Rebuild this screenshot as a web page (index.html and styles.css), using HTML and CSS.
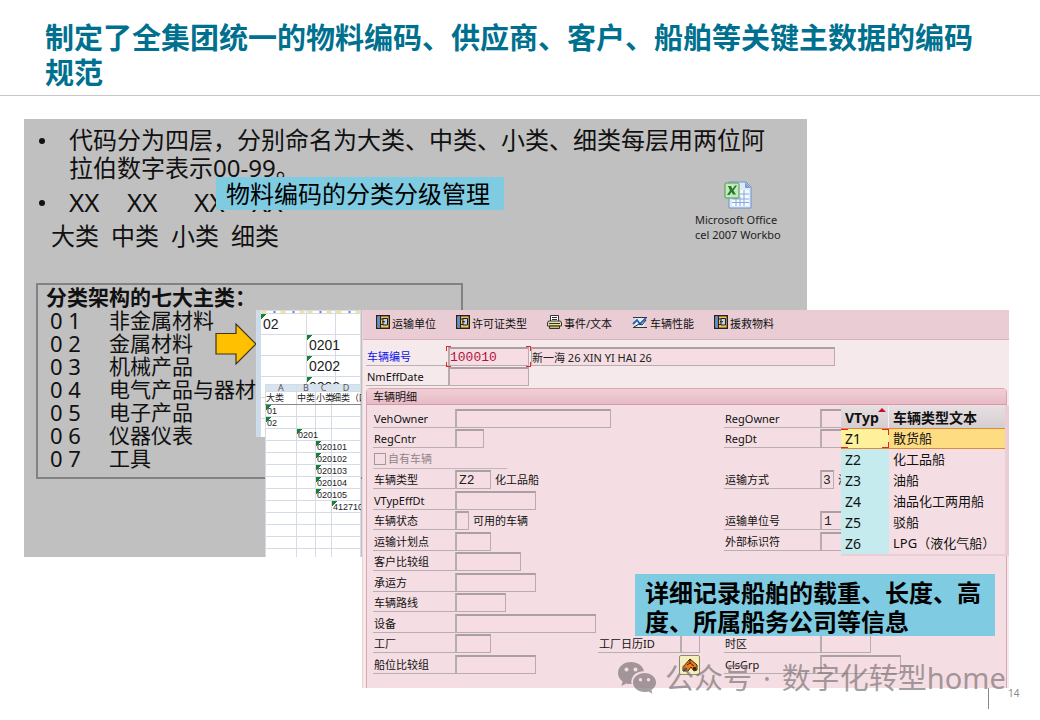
FILE: index.html
```html
<!DOCTYPE html>
<html lang="zh-CN">
<head>
<meta charset="utf-8">
<title>主数据编码规范</title>
<link rel="stylesheet" href="styles.css">
</head>
<body>
<svg width="0" height="0" class="defs" aria-hidden="true">
  <symbol id="ico-unit" viewBox="0 0 14 14">
    <rect x=".7" y=".7" width="12.600" height="12.600" fill="#f7c04a" stroke="#222" stroke-width="1.400"/>
    <path d="M1.400 1.400h2.600v11.200H1.400z" fill="#5b8ad6"/><path d="M4.500 1v12" stroke="#222"/>
    <path d="M5 4h2.500M5 9.500h2.500" stroke="#222"/>
    <path d="M7 3.500h4.500v6.500H7z" fill="#b9d3f5" stroke="#222"/>
    <path d="M6 6.700h3" stroke="#222"/>
  </symbol>
</svg>
<main class="slide">
  <header class="slide-head">
    <h1>制定了全集团统一的物料编码、供应商、客户、船舶等关键主数据的编码规范</h1>
  </header>

  <div class="stage">
    <section class="codes">
      <ul class="rules">
        <li>代码分为四层，分别命名为大类、中类、小类、细类每层用两位阿拉伯数字表示00-99。</li>
        <li class="pairs"><span>XX</span><span>XX</span><span>XX</span><span>XX</span></li>
      </ul>
      <p class="levels"><span>大类</span><span>中类</span><span>小类</span><span>细类</span></p>
      <div class="classes">
        <h2>分类架构的七大主类：</h2>
        <dl>
          <dt>0 1</dt><dd>非金属材料</dd>
          <dt>0 2</dt><dd>金属材料</dd>
          <dt>0 3</dt><dd>机械产品</dd>
          <dt>0 4</dt><dd>电气产品与器材</dd>
          <dt>0 5</dt><dd>电子产品</dd>
          <dt>0 6</dt><dd>仪器仪表</dd>
          <dt>0 7</dt><dd>工具</dd>
        </dl>
      </div>
    </section>

    <figure class="attachment">
      <svg width="28" height="28" viewBox="0 0 28 28" aria-hidden="true">
        <path d="M5 1h17l5 5v21H5z" fill="#dbe9fb" stroke="#6f93c8"/>
        <path d="M21 1v6h6z" fill="#7fa0d4"/>
        <path d="M16 9h9v16H8v-7h8z" fill="#f4f8ff"/>
        <path d="M8 18h17M8 21.500h17M12 16v9M16 16v9M20 9v16M16 13h9" stroke="#8aa8dc"/>
        <rect x="1" y="2" width="14" height="15" rx="1" fill="#c5e8bd" stroke="#4f9a51"/>
        <path d="M4 5h3l1.500 3L11 4.500h2L9.500 9.500l2.500 4H9L7.500 11l-2 3H3l3-4.500z" fill="#257b2d"/>
      </svg>
      <figcaption>Microsoft Office<br>cel 2007 Workbo</figcaption>
    </figure>

    <p class="callout callout-top">物料编码的分类分级管理</p>

    <svg class="arrow" width="42" height="42" viewBox="0 0 42 42" aria-hidden="true">
      <path d="M1 10.500H21V1L41 21 21 41V31H1z" fill="#ffc000" stroke="#3d3520" stroke-width="1.200"/>
    </svg>

    <div class="sheet sheet-back">
      <table>
        <colgroup><col class="w4"><col class="w46"><col class="w29"><col></colgroup>
        <tr class="strip"><th></th><td></td><td></td><td></td></tr>
        <tr><th></th><td class="n">02</td><td></td><td></td></tr>
        <tr><th></th><td></td><td class="n">0201</td><td></td></tr>
        <tr><th></th><td></td><td class="n">0202</td><td></td></tr>
        <tr><th></th><td></td><td class="n">0203</td><td></td></tr>
        <tr><th></th><td></td><td></td><td></td></tr>
        <tr><th></th><td></td><td></td><td></td></tr>
      </table>
    </div>

    <div class="sheet sheet-front">
      <table>
        <colgroup><col class="w31"><col class="w19"><col class="w16"><col></colgroup>
        <tr class="letters"><th>A</th><th>B</th><th>C</th><th>D</th></tr>
        <tr class="names"><td>大类</td><td>中类</td><td>小类</td><td>细类（四</td></tr>
        <tr><td class="n">01</td><td></td><td></td><td></td></tr>
        <tr><td class="n">02</td><td></td><td></td><td></td></tr>
        <tr><td></td><td class="n">0201</td><td></td><td></td></tr>
        <tr><td></td><td></td><td class="n">020101</td><td></td></tr>
        <tr><td></td><td></td><td class="n">020102</td><td></td></tr>
        <tr><td></td><td></td><td class="n">020103</td><td></td></tr>
        <tr><td></td><td></td><td class="n">020104</td><td></td></tr>
        <tr><td></td><td></td><td class="n">020105</td><td></td></tr>
        <tr><td></td><td></td><td></td><td class="n">412710</td></tr>
        <tr><td></td><td></td><td></td><td></td></tr>
        <tr><td></td><td></td><td></td><td></td></tr>
        <tr><td></td><td></td><td></td><td></td></tr>
        <tr><td></td><td></td><td></td><td></td></tr>
      </table>
    </div>

    <form class="vehicle">
      <div class="toolbar">
        <button type="button"><svg width="14" height="14"><use href="#ico-unit"/></svg>运输单位</button>
        <button type="button"><svg width="14" height="14"><use href="#ico-unit"/></svg>许可证类型</button>
        <button type="button"><svg width="15" height="14" viewBox="0 0 15 14"><path d="M3.500 6V.5h8V6" fill="#fff" stroke="#333"/><path d="M5 2.500h5M5 4.500h5" stroke="#333"/><path d="M1.500 6h12l1 2v3H.5V8z" fill="#e9e2a0" stroke="#333"/><path d="M2.500 11h10v2.500h-10z" fill="#c9bd5c" stroke="#333"/><path d="M2 8.500h11" stroke="#333"/></svg>事件/文本</button>
        <button type="button"><svg width="16" height="13" viewBox="0 0 16 13"><path d="M1 1.500h14M1 11.500h14" stroke="#333"/><path d="M3 2h11l-2 9H2z" fill="#e3eefb"/><path d="M1 8l4-4 3 4 6-6" fill="none" stroke="#275fae" stroke-width="1.800"/><path d="M2 11l5-3 3 1 4-5" fill="none" stroke="#222"/></svg>车辆性能</button>
        <button type="button"><svg width="14" height="14"><use href="#ico-unit"/></svg>援救物料</button>
      </div>

      <div class="ident">
        <div class="cell"><label for="veh" class="key">车辆编号</label><span class="focus"><input id="veh" class="code f81" value="100010"></span><input class="name" aria-label="车辆名称" value="新一海 26 XIN YI HAI 26"></div>
        <div class="cell"><label for="nm">NmEffDate</label><input id="nm" class="f81"></div>
      </div>

      <fieldset class="detail">
        <legend>车辆明细</legend>
        <div class="rows">
          <div class="row"><div class="cell"><label for="a1">VehOwner</label><input id="a1" class="f156"></div><div class="cell right"><label for="b1">RegOwner</label><input id="b1" class="f81"></div></div>
          <div class="row"><div class="cell"><label for="a2">RegCntr</label><input id="a2" class="f29"></div><div class="cell right"><label for="b2">RegDt</label><input id="b2" class="f81"></div></div>
          <div class="row"><div class="own"><input id="own" type="checkbox" disabled><label for="own">自有车辆</label></div></div>
          <div class="row"><div class="cell"><label for="a4">车辆类型</label><input id="a4" class="code f36" value="Z2"><span>化工品船</span></div><div class="cell right"><label for="b4">运输方式</label><input id="b4" class="code f14" value="3"><span>海运</span></div></div>
          <div class="row"><div class="cell"><label for="a5">VTypEffDt</label><input id="a5" class="f81"></div></div>
          <div class="row"><div class="cell"><label for="a6">车辆状态</label><input id="a6" class="f14"><span>可用的车辆</span></div><div class="cell right"><label for="b6">运输单位号</label><input id="b6" class="code f36" value="1"></div></div>
          <div class="row"><div class="cell"><label for="a7">运输计划点</label><input id="a7" class="f36"></div><div class="cell right"><label for="b7">外部标识符</label><input id="b7" class="f81"></div></div>
          <div class="row"><div class="cell"><label for="a8">客户比较组</label><input id="a8" class="f66"></div></div>
          <div class="row"><div class="cell"><label for="a9">承运方</label><input id="a9" class="f81"></div></div>
          <div class="row"><div class="cell"><label for="a10">车辆路线</label><input id="a10" class="f51"></div></div>
          <div class="row"><div class="cell"><label for="a11">设备</label><input id="a11" class="f141"></div></div>
          <div class="row"><div class="cell"><label for="a12">工厂</label><input id="a12" class="f36"></div><div class="cell mid"><label for="c12">工厂日历ID</label><input id="c12" class="f20"></div><div class="cell right"><label for="b12">时区</label><input id="b12" class="f51"></div></div>
          <div class="row"><div class="cell"><label for="a13">船位比较组</label><input id="a13" class="f81"></div><div class="cell mid"><button type="button" class="pick" aria-label="分类"><svg width="16" height="14" viewBox="0 0 16 14"><path d="M1 9L8 1l7 6v5l-3 1-3-4-3 4H1z" fill="#f47a16" stroke="#40260a"/><path d="M8 1v4l4 3M5 7l3-2" stroke="#40260a" fill="none"/><path d="M2 10h3v3H2zM11 9h3v3h-3z" fill="#3a2a1a"/></svg></button></div><div class="cell right"><label for="b13">ClsGrp</label><input id="b13" class="f81"></div></div>
        </div>
      </fieldset>
    </form>

    <table class="types">
      <thead><tr><th>VTyp<i class="sort"></i></th><th>车辆类型文本</th></tr></thead>
      <tbody>
        <tr class="on"><td>Z1</td><td>散货船</td></tr>
        <tr><td>Z2</td><td>化工品船</td></tr>
        <tr><td>Z3</td><td>油船</td></tr>
        <tr><td>Z4</td><td>油品化工两用船</td></tr>
        <tr><td>Z5</td><td>驳船</td></tr>
        <tr><td>Z6</td><td>LPG（液化气船）</td></tr>
      </tbody>
    </table>

    <p class="callout callout-ship">详细记录船舶的载重、长度、高度、所属船务公司等信息</p>

    <div class="watermark">
      <svg width="40" height="34" viewBox="0 0 40 34" aria-hidden="true">
        <path fill-rule="evenodd" d="M14 1C6.500 1 1 5.800 1 12c0 3.500 1.800 6.300 4.600 8.400L4.400 25l4.900-2.600c1.500.5 3.200.7 5.200.6C13.300 15.500 19 10.200 27 10.200 25.800 4.600 20.500 1 14 1zM9.500 6.500a2 2 0 1 1 0 4 2 2 0 0 1 0-4zm9 0a2 2 0 1 1 0 4 2 2 0 0 1 0-4z"/>
        <path fill-rule="evenodd" d="M27.500 12C21 12 16 16.300 16 21.500S21 31 27.500 31c1.400 0 2.800-.2 4-.6l4 2.300-1.100-3.700C37.200 27.200 39 24.500 39 21.500 39 16.300 34 12 27.500 12zM23.500 17a1.700 1.700 0 1 1 0 3.400 1.700 1.700 0 0 1 0-3.400zm8 0a1.700 1.700 0 1 1 0 3.400 1.700 1.700 0 0 1 0-3.400z"/>
      </svg>
      <p><span>公众号</span><span>·</span><span>数字化转型home</span></p>
    </div>
  </div>

  <footer class="page-no">14</footer>
</main>
</body>
</html>
```
FILE: styles.css
```css
* { box-sizing: border-box; }
body {
  margin: 0;
  background: #fff;
  color: #111;
  font-family: "Noto Sans", "Noto Sans CJK SC", sans-serif;
}
h1, h2, p, ul, dl, dd, figure { margin: 0; padding: 0; }
.defs { position: absolute; }
.slide { position: relative; min-height: 720px; }

.slide-head { padding: 20px 45px 5px; border-bottom: 1px solid #c6c6c6; }
.slide-head h1 {
  color: #00708f;
  font-size: 29px;
  line-height: 35px;
  font-weight: 700;
}

/* Free canvas that holds the overlapping pictures of the slide */
.stage { position: absolute; inset: 0; }
.stage > * { position: absolute; }

.codes {
  left: 24px; top: 119px;
  width: 783px; height: 438px;
  padding: 7px 0 0 12px;
  background: #c0c0c0;
  font-size: 24px;
  line-height: 28px;
}
.rules { list-style: none; width: 732px; }
.rules li { display: flow-root; position: relative; padding-left: 33px; }
.rules li::before { content: ""; position: absolute; left: 3px; top: 12px; width: 6px; height: 6px; border-radius: 50%; background: #111; }
.rules .pairs { display: flex; margin-top: 6px; font-size: 26px; }
.pairs span { width: 58px; }
.pairs span:nth-child(2) { width: 67px; }
.levels { display: flex; gap: 12px; padding: 6px 0 0 15px; }
.classes {
  width: 427px;
  height: 196px;
  margin-top: 33px;
  padding: 0 8px;
  border: 2px solid #828282;
  line-height: 23px;
}
.classes h2 { font-size: 21px; line-height: 24px; font-weight: 700; }
.classes dl { display: grid; grid-template-columns: 59px 1fr; font-size: 21px; padding-left: 4px; }
.classes dt { font-size: 22px; }

.attachment { left: 695px; top: 181px; width: 90px; overflow: hidden; font-size: 11px; line-height: 15px; color: #222; white-space: nowrap; }
.attachment svg { display: block; margin: 0 0 3px 29px; }

.callout { background: #7fcbe1; color: #000; font-size: 24px; }
.callout-top { left: 216px; top: 177px; padding: 1px 14px 0 10px; line-height: 32px; }
.callout-ship { left: 635px; top: 574px; width: 360px; padding: 4px 10px 0; line-height: 29px; font-weight: 700; }
.arrow { left: 215px; top: 323px; }

.sheet { overflow: hidden; background: #fff; }
.sheet table { width: 100%; table-layout: fixed; border-collapse: collapse; }
.sheet th, .sheet td { padding: 0; border: 1px solid #d5dce6; white-space: nowrap; font-weight: 400; text-align: left; color: #222; }
.sheet .n { font-family: "Liberation Sans Narrow", "Liberation Sans", sans-serif; background: linear-gradient(135deg, #16803a 4px, transparent 4px) no-repeat; }
.w4 { width: 4px; } .w46 { width: 46px; } .w29 { width: 29px; }
.w31 { width: 31px; } .w19 { width: 19px; } .w16 { width: 16px; }
.sheet-back { left: 256px; top: 310px; width: 105px; height: 127px; }
.sheet-back table { font-size: 14px; line-height: 18px; }
.sheet-back tr { height: 21px; }
.sheet-back th { background: #c9dcee; }
.sheet-back .strip { height: 3px; line-height: 2px; }
.sheet-back .strip td { background: repeating-linear-gradient(90deg, #f1e58a 0 5px, #fff 5px 12px, #6b83c4 12px 14px, #fff 14px 19px); }
.sheet-back .n { padding-left: 2px; }
.sheet-front { left: 265px; top: 384px; width: 96px; height: 173px; }
.sheet-front table { font-size: 9px; line-height: 10px; }
.sheet-front tr { height: 12px; }
.sheet-front .letters { height: 7px; }
.sheet-front .letters th { background: #d8e3f0; text-align: center; font-size: 9px; line-height: 6px; color: #555; }
.sheet-front .names td { font-size: 9px; line-height: 12px; border-bottom-color: #888; }
.sheet-front .n { padding-left: 1px; }

.vehicle {
  left: 362px; top: 310px;
  width: 647px; height: 378px;
  background: #f6e9ec;
  font-size: 11px;
  line-height: 16px;
  border-left: 1px solid #ecd5da;
  overflow: hidden;
}
.toolbar { display: flex; gap: 20px; height: 30px; padding: 0 13px; background: #e9ccd4; border-bottom: 1px solid #d5b1bc; }
.toolbar button { display: flex; align-items: center; gap: 2px; padding: 0 0 2px; border: 0; background: none; color: #111; font: inherit; white-space: nowrap; }
.toolbar svg { margin-bottom: 3px; }
.ident { padding: 7px 0 0 3px; display: grid; gap: 1px; }
.cell { display: flex; align-items: flex-start; }
.cell > * { flex: none; }
.cell label { width: 82px; height: 19px; padding: 1px 0 0 1px; border-bottom: 1px solid #b9aeb2; white-space: nowrap; line-height: 17px; }
.cell > span:not(.focus) { padding: 1px 0 0 4px; line-height: 18px; white-space: nowrap; }
input:not([type="checkbox"]) {
  height: 19px;
  padding: 0 2px;
  border: 1px solid #b7adb1;
  border-top: 2px solid #aaa0a4;
  border-left-width: 2px;
  border-radius: 0;
  background: #f5dde3;
  color: #222;
  font: inherit;
}
input.code { font-family: "Liberation Mono", monospace; font-size: 13px; }
input.f14 { width: 14px; padding: 0 1px; } input.f20 { width: 20px; } input.f29 { width: 29px; }
input.f36 { width: 36px; } input.f51 { width: 51px; } input.f66 { width: 66px; }
input.f81 { width: 81px; } input.f141 { width: 141px; } input.f156 { width: 156px; }
.key { color: #0a14e6; }
.ident #veh { display: block; padding: 0; color: #b3123c; }
.focus {
  margin: -1px 0 -1px -2px;
  padding: 1px 2px;
  background:
    linear-gradient(#e22 0 0) 0 0 / 5px 1px, linear-gradient(#e22 0 0) 0 0 / 1px 5px,
    linear-gradient(#e22 0 0) 100% 0 / 5px 1px, linear-gradient(#e22 0 0) 100% 0 / 1px 5px,
    linear-gradient(#e22 0 0) 0 100% / 5px 1px, linear-gradient(#e22 0 0) 0 100% / 1px 5px,
    linear-gradient(#e22 0 0) 100% 100% / 5px 1px, linear-gradient(#e22 0 0) 100% 100% / 1px 5px;
  background-repeat: no-repeat;
}
input:not([type="checkbox"]).name { width: 304px; padding: 0; border-left-width: 1px; }
.detail {
  margin: 2px 2px 0 3px;
  padding: 0;
  min-width: 0;
  height: 310px;
  border: 1px solid #d9a7b2;
  border-radius: 4px 4px 0 0;
  background: #f5dee3;
}
.detail legend { float: left; width: 100%; padding: 0 6px; line-height: 15px; background: linear-gradient(#f0cfd6, #e8bac5); border-bottom: 1px solid #d29aa8; }
.rows { clear: both; display: grid; grid-auto-rows: 1fr; height: 270px; padding: 4px 0 0 6px; }
.row { display: grid; grid-template-columns: 225px 126px 1fr; align-items: start; }
.row .mid { grid-column: 2; }
.row .mid label { width: 82px; }
.row .right { grid-column: 3; }
.right label { width: 96px; }
.own { display: flex; align-items: center; gap: 2px; width: 134px; height: 19px; border-bottom: 1px solid #c3b6ba; color: #8f8588; }
.own input { appearance: none; width: 12px; height: 12px; margin: 0 0 0 1px; border: 1px solid #a2989c; }
.pick { display: grid; place-items: center; width: 21px; height: 20px; margin-left: 81px; padding: 0; border: 1px solid #8e8a70; border-radius: 2px; background: #f5efbd; }

.types { left: 841px; top: 406px; width: 168px; border-collapse: separate; border-spacing: 0; border-right: 4px solid #ebcdd5; border-bottom: 2px solid #ebcdd5; background: #f5dee3; font-size: 13px; line-height: 19px; }
.types th, .types td { height: 21px; padding: 0 4px; text-align: left; white-space: nowrap; }
.types th { position: relative; height: 22px; background: linear-gradient(#e6dfe1, #d6cdd0); font-size: 14px; }
.types th:first-child { width: 48px; border-right: 1px solid #f5f0f1; }
.types td:first-child { background: #c5ebee; font-size: 14px; }
.types .on td { background: #fedc82; border-top: 1px solid #dd8a3c; border-bottom: 1px solid #dd8a3c; }
.types .on td:first-child {
  background:
    linear-gradient(#e22 0 0) 0 0 / 7px 1px, linear-gradient(#e22 0 0) 100% 0 / 7px 1px,
    linear-gradient(#e22 0 0) 0 100% / 7px 1px, linear-gradient(#e22 0 0) 100% 100% / 7px 1px,
    linear-gradient(#e22 0 0) 100% 0 / 1px 6px, linear-gradient(#e22 0 0) 100% 100% / 1px 6px, #fff09c;
  background-repeat: no-repeat;
}
.sort { position: absolute; right: 2px; top: 2px; border: 4px solid transparent; border-top: 0; border-bottom-color: #c8102e; }

.watermark { left: 617px; top: 660px; display: flex; align-items: center; gap: 8px; color: #807679; fill: #807679; opacity: .7; font-size: 29px; line-height: 36px; white-space: nowrap; }
.watermark p { display: flex; gap: 11px; }
.page-no { position: absolute; left: 988px; top: 688px; height: 21px; padding-left: 19px; border-left: 1px solid #8a8a8a; color: #8a8a8a; font-size: 10px; line-height: 11px; }
```
